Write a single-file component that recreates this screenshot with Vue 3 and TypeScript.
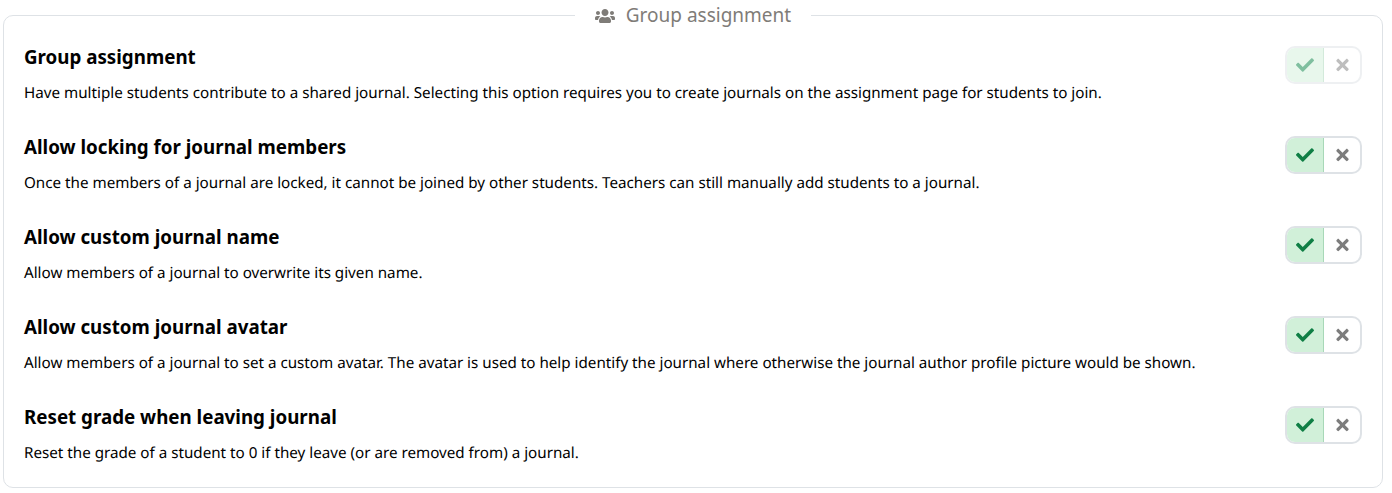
<script setup lang="ts">
interface Option {
  title: string;
  description: string;
  disabled?: boolean;
}

const options: Option[] = [
  {
    title: 'Group assignment',
    description:
      'Have multiple students contribute to a shared journal. Selecting this option requires you to create journals on the assignment page for students to join.',
    disabled: true,
  },
  {
    title: 'Allow locking for journal members',
    description:
      'Once the members of a journal are locked, it cannot be joined by other students. Teachers can still manually add students to a journal.',
  },
  {
    title: 'Allow custom journal name',
    description: 'Allow members of a journal to overwrite its given name.',
  },
  {
    title: 'Allow custom journal avatar',
    description:
      'Allow members of a journal to set a custom avatar. The avatar is used to help identify the journal where otherwise the journal author profile picture would be shown.',
  },
  {
    title: 'Reset grade when leaving journal',
    description: 'Reset the grade of a student to 0 if they leave (or are removed from) a journal.',
  },
];
</script>

<template>
  <fieldset class="settings">
    <legend class="settings-legend">
      <svg class="legend-icon" viewBox="0 0 640 512" aria-hidden="true">
        <path
          d="M96 224c35.3 0 64-28.7 64-64s-28.7-64-64-64-64 28.7-64 64 28.7 64 64 64zm448 0c35.3 0 64-28.7 64-64s-28.7-64-64-64-64 28.7-64 64 28.7 64 64 64zm32 32h-64c-17.6 0-33.5 7.1-45.1 18.6 40.3 22.1 68.9 62 75.1 109.4h66c17.7 0 32-14.3 32-32v-32c0-35.3-28.7-64-64-64zm-256 0c61.9 0 112-50.1 112-112S381.9 32 320 32 208 82.1 208 144s50.1 112 112 112zm76.8 32h-8.3c-20.8 10-43.9 16-68.5 16s-47.6-6-68.5-16h-8.3C179.6 288 128 339.6 128 403.2V432c0 26.5 21.5 48 48 48h288c26.5 0 48-21.5 48-48v-28.8c0-63.6-51.6-115.2-115.2-115.2zm-223.7-13.4C161.5 263.1 145.6 256 128 256H64c-35.3 0-64 28.7-64 64v32c0 17.7 14.3 32 32 32h65.9c6.3-47.4 34.9-87.3 75.2-109.4z"
        />
      </svg>
      Group assignment
    </legend>

    <div v-for="option in options" :key="option.title" class="option">
      <div class="option-text">
        <h3 class="option-title">{{ option.title }}</h3>
        <p class="option-description">{{ option.description }}</p>
      </div>
      <div class="toggle" :class="{ 'is-disabled': option.disabled }">
        <span class="toggle-on">
          <svg class="toggle-check" viewBox="0 0 512 512" aria-hidden="true">
            <path
              d="M173.898 439.404l-166.4-166.4c-9.997-9.997-9.997-26.206 0-36.204l36.203-36.204c9.997-9.998 26.207-9.998 36.204 0L192 312.69 432.095 72.596c9.997-9.997 26.207-9.997 36.204 0l36.203 36.204c9.997 9.997 9.997 26.206 0 36.204l-294.4 294.401c-9.998 9.997-26.207 9.997-36.204-.001z"
            />
          </svg>
        </span>
        <span class="toggle-off">
          <svg class="toggle-cross" viewBox="0 0 352 512" aria-hidden="true">
            <path
              d="M242.72 256l100.07-100.07c12.28-12.28 12.28-32.19 0-44.48l-22.24-22.24c-12.28-12.28-32.19-12.28-44.48 0L176 189.28 75.93 89.21c-12.28-12.28-32.19-12.28-44.48 0L9.21 111.45c-12.28 12.28-12.28 32.19 0 44.48L109.28 256 9.21 356.07c-12.28 12.28-12.28 32.19 0 44.48l22.24 22.24c12.28 12.28 32.2 12.28 44.48 0L176 322.72l100.07 100.07c12.28 12.28 32.2 12.28 44.48 0l22.24-22.24c12.28-12.28 12.28-32.19 0-44.48L242.72 256z"
            />
          </svg>
        </span>
      </div>
    </div>
  </fieldset>
</template>

<style>
html,
body {
  margin: 0;
  background: #fff;
}
</style>

<style scoped>
.settings {
  box-sizing: border-box;
  width: 1380px;
  height: 488px;
  margin: 0 0 0 3px;
  padding: 15px 20px 0;
  border: 1px solid #dee2e6;
  border-radius: 10px;
  font-family: 'Noto Sans', sans-serif;
  color: #000;
}

.settings-legend {
  margin: 0 auto;
  padding: 0 20px;
  height: 30px;
  font-size: 19px;
  line-height: 30px;
  color: #7f7c78;
}

.legend-icon {
  width: 20px;
  height: 16px;
  margin-right: 6px;
  vertical-align: -2px;
  fill: #7f7c78;
}

.option {
  display: flex;
  justify-content: space-between;
  height: 90px;
}

.option-text {
  min-width: 0;
}

.option-title {
  margin: 0 0 12px;
  font-size: 18.75px;
  font-weight: 700;
  line-height: 24px;
}

.option-description {
  margin: 0;
  font-size: 15.2px;
  line-height: 24px;
  text-rendering: geometricPrecision;
}

.toggle {
  box-sizing: border-box;
  display: flex;
  flex: none;
  align-self: flex-start;
  width: 77px;
  height: 38px;
  margin-top: 1px;
  border: 2px solid #dee2e6;
  border-radius: 10px;
  overflow: hidden;
}

.toggle-on,
.toggle-off {
  display: flex;
  flex: 1;
  align-items: center;
  justify-content: center;
}

.toggle-on {
  background: #d1f0d9;
  border-right: 1px solid #a8d8b8;
}

.toggle-check {
  width: 18px;
  height: 18px;
  fill: #0f7f45;
}

.toggle-cross {
  width: 13px;
  height: 18px;
  fill: #7d7d7d;
}

.toggle.is-disabled {
  border-color: #eef0f2;
}

.toggle.is-disabled .toggle-on {
  background: #e8f7ec;
  border-right-color: #d3eadb;
}

.toggle.is-disabled .toggle-check {
  fill: #7fbf9f;
}

.toggle.is-disabled .toggle-cross {
  fill: #bebebe;
}
</style>
